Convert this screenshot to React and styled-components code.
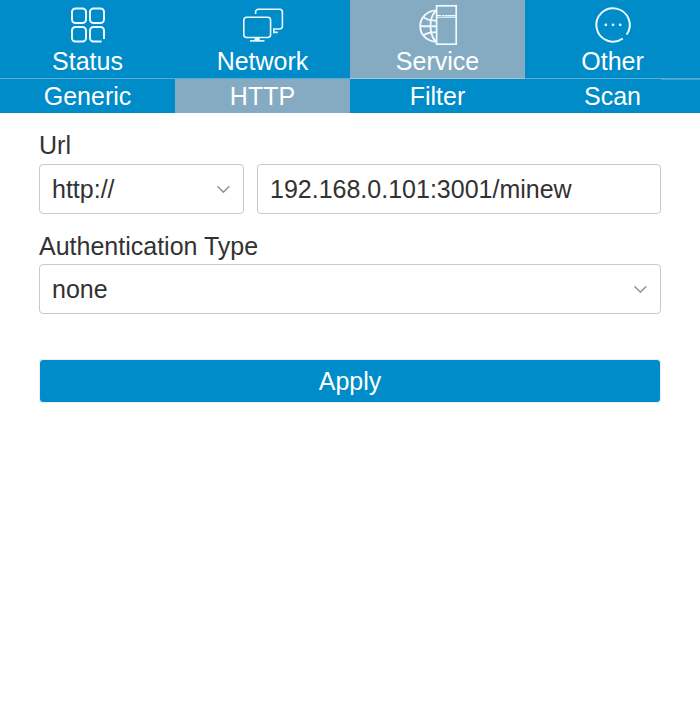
import React from "react";
import styled, { createGlobalStyle } from "styled-components";

const GlobalStyle = createGlobalStyle`
  * { box-sizing: border-box; }
  body {
    margin: 0;
    background: #fff;
    color: #323233;
    font-family: "Liberation Sans", Arial, sans-serif;
    font-size: 25px;
  }
`;

const MainNav = styled.nav`
  display: grid;
  grid-template-columns: repeat(4, 1fr);
  height: 79px;
  background: #008bc9;
`;

const MainTab = styled.a`
  display: flex;
  flex-direction: column;
  align-items: center;
  color: #fff;
  background: ${(p) => (p.$active ? "#84abc1" : "#008bc9")};
  border-bottom: 1px solid ${(p) => (p.$active ? "#a9c5d4" : "#5aaed5")};
`;

const TabIcon = styled.svg`
  display: block;
  width: 75px;
  height: 47px;
  fill: none;
  stroke: #f0f9fd;
  stroke-width: 2;
`;

const TabLabel = styled.span`
  line-height: 29px;
`;

const SubNav = styled.nav`
  position: relative;
  display: grid;
  grid-template-columns: repeat(4, 1fr);
  grid-template-rows: 34px;
  height: 34px;

  &::after {
    content: "";
    position: absolute;
    top: 0;
    right: 0;
    width: 39px;
    height: 1px;
    background: #3ea3d2;
  }
`;

const SubTab = styled.a`
  height: 34px;
  color: #fff;
  text-align: center;
  line-height: 35px;
  background: ${(p) => (p.$active ? "#84abc1" : "#008bc9")};
`;

const Form = styled.main`
  padding: 18px 39px 0;
`;

const Label = styled.div`
  line-height: 29px;
  height: ${(p) => p.$height}px;
`;

const UrlRow = styled.div`
  display: grid;
  grid-template-columns: 205px 404px;
  column-gap: 13px;
  margin-bottom: 18px;
`;

const Field = styled.div`
  display: flex;
  align-items: center;
  justify-content: space-between;
  height: 50px;
  padding: 0 12px;
  border: 1px solid #c8c9cc;
  border-radius: 4px;
`;

const Arrow = styled.svg`
  width: 16px;
  height: 10px;
  fill: none;
  stroke: #969799;
  stroke-width: 1.5;
`;

const ApplyButton = styled.button`
  display: block;
  width: 100%;
  height: 44px;
  margin-top: 45px;
  padding: 0;
  border: 1px solid #ebedf0;
  border-radius: 4px;
  background: #008bc9;
  color: #fff;
  font: inherit;
  line-height: 42px;
`;

const StatusIcon = () => (
  <TabIcon viewBox="0 0 75 47">
    <rect x="22" y="8.5" width="14" height="14.5" rx="3.5" />
    <rect x="40" y="8.5" width="14" height="14.5" rx="3.5" />
    <rect x="22" y="27" width="14" height="14.5" rx="3.5" />
    <path d="M51.5 41.5H43.5a3.5 3.5 0 0 1-3.5-3.5V30.5a3.5 3.5 0 0 1 3.5-3.5h7a3.5 3.5 0 0 1 3.5 3.5V39" />
  </TabIcon>
);

const NetworkIcon = () => (
  <TabIcon viewBox="0 0 75 47">
    <g strokeWidth="1.6">
      <rect x="18.8" y="17.3" width="26.8" height="20.2" rx="3" />
      <path d="M30.6 14V12a2.8 2.8 0 0 1 2.8-2.8H54.6a2.8 2.8 0 0 1 2.8 2.8v14.2a2.8 2.8 0 0 1-2.8 2.8h-5.8v3.4h4" />
      <path d="M25 40.9h14.5" />
    </g>
    <path d="M29.5 37.5h5.2v3.2h-5.2z" fill="#f0f9fd" stroke="none" />
  </TabIcon>
);

const ServiceIcon = () => (
  <TabIcon viewBox="0 0 75 47">
    <rect x="36.6" y="5.8" width="19.6" height="38.4" strokeWidth="1.7" />
    <g strokeWidth="1.9">
      <path d="M36.5 10.4C27 10.7 20.2 17.5 20.2 26.2S27 41.6 36.5 41.8" />
      <path d="M35.5 11.2C28.8 18 28.8 34 35.5 41" />
      <path d="M23.5 17.3c4 3 8 3.4 13 3.4M20 26.2h16.5M23.5 35.2c4-2.8 8-3.1 13-3.1" />
    </g>
    <g strokeWidth="1.1">
      <path d="M37 15.6h1M42 15.6h0.8M44.5 15.6h12M37 17.3h19.5" />
      <path d="M38 15.5h3.2M42.5 15.5h1.5" stroke="#fff" />
    </g>
  </TabIcon>
);

const OtherIcon = () => (
  <TabIcon viewBox="0 0 75 47">
    <path d="M47.8 38.5A16.7 16.7 0 1 1 51.6 34.7" />
    <g fill="#f0f9fd" stroke="none">
      <circle cx="30.8" cy="24.8" r="1.4" />
      <circle cx="38" cy="24.8" r="1.4" />
      <circle cx="45.2" cy="24.8" r="1.4" />
    </g>
  </TabIcon>
);

const Chevron = () => (
  <Arrow viewBox="0 0 16 10">
    <path d="M2.4 2.2L8.4 8.1L14.4 2.2" />
  </Arrow>
);

const sections = [
  { name: "Status", Icon: StatusIcon },
  { name: "Network", Icon: NetworkIcon },
  { name: "Service", Icon: ServiceIcon },
  { name: "Other", Icon: OtherIcon },
];

const pages = ["Generic", "HTTP", "Filter", "Scan"];

export default function App() {
  return (
    <>
      <GlobalStyle />
      <MainNav>
        {sections.map(({ name, Icon }) => (
          <MainTab key={name} $active={name === "Service"}>
            <Icon />
            <TabLabel>{name}</TabLabel>
          </MainTab>
        ))}
      </MainNav>
      <SubNav>
        {pages.map((name) => (
          <SubTab key={name} $active={name === "HTTP"}>{name}</SubTab>
        ))}
      </SubNav>
      <Form>
        <Label $height={33}>Url</Label>
        <UrlRow>
          <Field>http://<Chevron /></Field>
          <Field>192.168.0.101:3001/minew</Field>
        </UrlRow>
        <Label $height={32}>Authentication Type</Label>
        <Field>none<Chevron /></Field>
        <ApplyButton>Apply</ApplyButton>
      </Form>
    </>
  );
}
